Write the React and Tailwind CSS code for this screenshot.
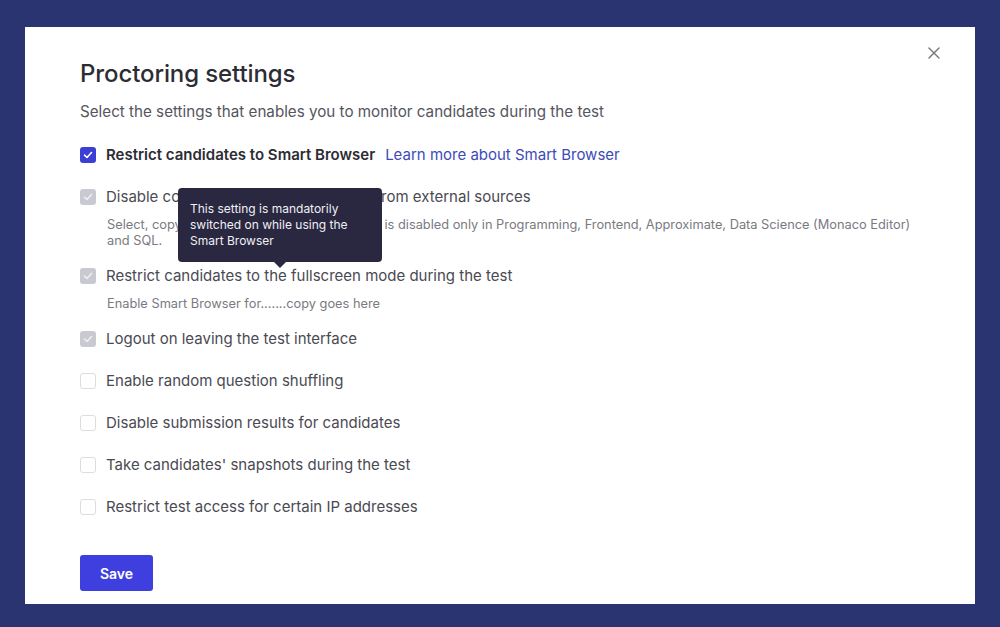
import { X } from 'lucide-react';

const options = [
  { label: 'Restrict candidates to Smart Browser', state: 'on', link: 'Learn more about Smart Browser' },
  {
    label: 'Disable copy-paste in the code editor from external sources',
    state: 'locked',
    desc: 'Select, copy and paste from external sources is disabled only in Programming, Frontend, Approximate, Data Science (Monaco Editor) and SQL.',
    tip: true,
  },
  { label: 'Restrict candidates to the fullscreen mode during the test', state: 'locked', desc: 'Enable Smart Browser for.......copy goes here' },
  { label: 'Logout on leaving the test interface', state: 'locked' },
  { label: 'Enable random question shuffling', state: 'off' },
  { label: 'Disable submission results for candidates', state: 'off' },
  { label: "Take candidates' snapshots during the test", state: 'off' },
  { label: 'Restrict test access for certain IP addresses', state: 'off' },
];

function Box({ state }) {
  if (state === 'off') {
    return <span className="w-[16px] h-[16px] rounded-[3px] border border-[#dcdce2] bg-white shrink-0" />;
  }
  const bg = state === 'on' ? 'bg-[#3c3fd6]' : 'bg-[#c9c9d1]';
  const stroke = state === 'on' ? '#ffffff' : '#eeeef3';
  return (
    <span className={`w-[16px] h-[16px] rounded-[3px] ${bg} flex items-center justify-center shrink-0`}>
      <svg width="10" height="10" viewBox="0 0 10 10" fill="none">
        <path d="M1.5 5.2 L4 7.5 L8.5 2.5" stroke={stroke} strokeWidth="1.6" strokeLinecap="round" strokeLinejoin="round" />
      </svg>
    </span>
  );
}

export default function App() {
  return (
    <div className="w-[1000px] h-[627px] bg-[#2a3470] pt-[27px] pl-[25px]" style={{ fontFamily: 'Inter, "Noto Sans", sans-serif' }}>
      <div className="relative w-[950px] h-[577px] bg-white pl-[55px] pt-[31px]">
        <button className="absolute right-[31px] top-[16px] text-[#777]">
          <X size={20} strokeWidth={1.6} />
        </button>
        <h1 className="text-[24px] leading-[32px] font-medium text-[#2c2c34] tracking-[-0.1px]">Proctoring settings</h1>
        <p className="mt-[12px] text-[15.2px] leading-[20px] text-[#55555e]">
          Select the settings that enables you to monitor candidates during the test
        </p>

        <div className="mt-[22px] flex flex-col">
          {options.map((o, i) => (
            <div key={i} className={`relative ${o.desc ? '' : 'h-[42px]'}`}>
              <div className="flex items-center gap-[10px] h-[22px]">
                <Box state={o.state} />
                <span className={`text-[15px] ${o.state === 'on' ? 'font-semibold text-[#2c2c34]' : 'text-[#4a4a52]'}`}>
                  {o.label}
                </span>
                {o.link && <span className="text-[15px] text-[#3d4ab8]">{o.link}</span>}
              </div>
              {o.desc && (
                <p className="pl-[27px] mt-[9px] mb-[16px] pr-[40px] text-[12.8px] leading-[16px] text-[#7a7a82]">{o.desc}</p>
              )}
              {o.tip && (
                <div className="absolute left-[98px] top-[2px] w-[204px] bg-[#2a2740] rounded-[4px] px-[12px] py-[13px] text-[12px] leading-[16px] text-[#f0f0f5]">
                  This setting is mandatorily switched on while using the Smart Browser
                  <span className="absolute left-[96px] bottom-[-6px] w-0 h-0 border-l-[6px] border-r-[6px] border-t-[6px] border-l-transparent border-r-transparent border-t-[#2a2740]" />
                </div>
              )}
            </div>
          ))}
        </div>

        <button className="mt-[17px] w-[73px] h-[36px] rounded-[3px] bg-[#3f3fe0] text-white text-[14px] font-semibold">Save</button>
      </div>
    </div>
  );
}
